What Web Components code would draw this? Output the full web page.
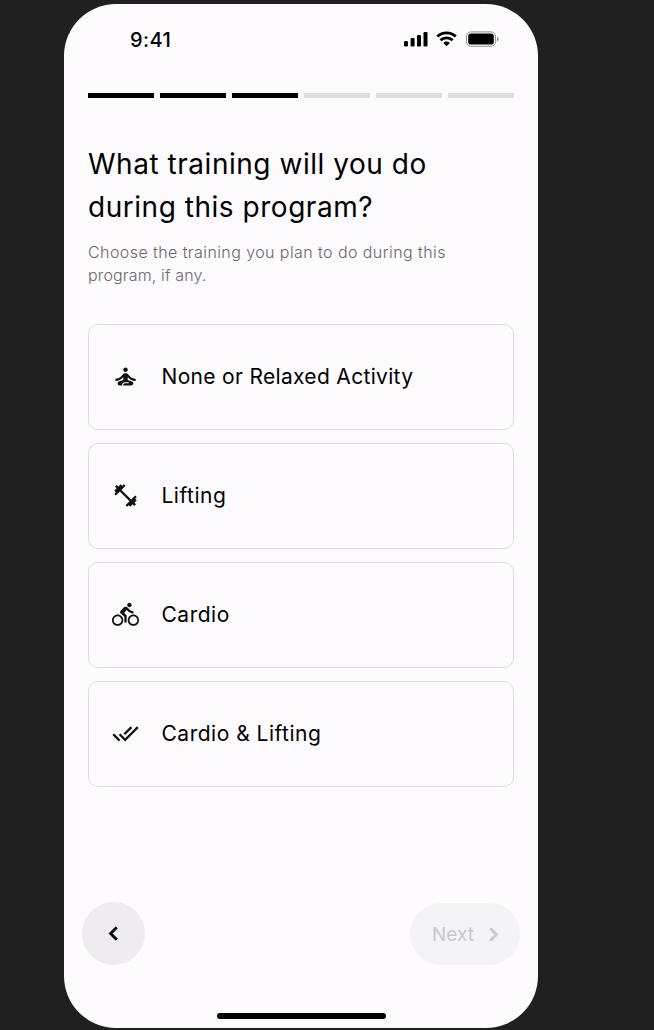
<!DOCTYPE html>
<html lang="en">
<head>
<meta charset="utf-8">
<title>Training setup</title>
<style>
html,body{margin:0;height:100%;overflow:hidden;background:#202020}
body{font-family:Inter,"Liberation Sans",sans-serif}
</style>
</head>
<body>
<training-screen></training-screen>
<script>
const define = (name, html, setup) => {
  const tpl = document.createElement('template');
  tpl.innerHTML = html;
  customElements.define(name, class extends HTMLElement {
    constructor() {
      super();
      this.attachShadow({mode: 'open'}).append(tpl.content.cloneNode(true));
    }
    connectedCallback() { if (setup) setup(this, this.shadowRoot); }
  });
};

const ICONS = {
  meditation: 'M12 4C13.11 4 14 4.89 14 6C14 7.11 13.11 8 12 8C10.9 8 10 7.11 10 6C10 4.9 10.9 4 12 4M21 16V14C18.76 14 16.84 13.04 15.4 11.32L14.06 9.72C13.68 9.26 13.12 9 12.53 9H11.5C10.89 9 10.33 9.26 9.95 9.72L8.61 11.32C7.16 13.04 5.24 14 3 14V16C5.77 16 8.19 14.83 10 12.75V15L6.12 16.55C5.45 16.82 5 17.5 5 18.21C5 19.2 5.8 20 6.79 20H9V19.5C9 18.12 10.12 17 11.5 17H14.5C14.78 17 15 17.22 15 17.5C15 17.78 14.78 18 14.5 18H11.5C10.67 18 10 18.67 10 19.5V20H17.1C18.11 20 19 19.11 19 18.1C19 17.4 18.55 16.81 17.88 16.55L14 15V12.75C15.81 14.83 18.23 16 21 16Z',
  dumbbell: 'M20.57 14.86L22 13.43 20.57 12 17 15.57 8.43 7 12 3.43 10.57 2 9.14 3.43 7.71 2 5.57 4.14 4.14 2.71 2.71 4.14l1.43 1.43L2 7.71l1.43 1.43L2 10.57 3.43 12 7 8.43 15.57 17 12 20.57 13.43 22l1.43-1.43L16.29 22l2.14-2.14 1.43 1.43 1.43-1.43-1.43-1.43L22 16.29z',
  bike: 'M15.5 5.5c1.1 0 2-.9 2-2s-.9-2-2-2-2 .9-2 2 .9 2 2 2zM5 12c-2.8 0-5 2.2-5 5s2.2 5 5 5 5-2.2 5-5-2.2-5-5-5zm0 8.5c-1.9 0-3.5-1.6-3.5-3.5s1.6-3.5 3.5-3.5 3.5 1.6 3.5 3.5-1.6 3.5-3.5 3.5zm5.8-10l2.4-2.4.8.8c1.3 1.3 3 2.1 5.1 2.1V9c-1.5 0-2.7-.6-3.6-1.5l-1.9-1.9c-.5-.4-1-.6-1.6-.6s-1.1.2-1.4.6L7.8 8.4c-.4.4-.6.9-.6 1.4 0 .6.2 1.1.6 1.4L11 14v5h2v-6.2l-2.2-2.3zM19 12c-2.8 0-5 2.2-5 5s2.2 5 5 5 5-2.2 5-5-2.2-5-5-5zm0 8.5c-1.9 0-3.5-1.6-3.5-3.5s1.6-3.5 3.5-3.5 3.5 1.6 3.5 3.5-1.6 3.5-3.5 3.5z',
  checks: 'M18 7l-1.41-1.41-6.34 6.34 1.41 1.41L18 7zm4.24-1.41L11.66 16.17 7.48 12l-1.41 1.41L11.66 19l12-12-1.42-1.41zM.41 13.41L6 19l1.41-1.41L1.83 12 .41 13.41z',
  left: 'M15.41 7.41L14 6l-6 6 6 6 1.41-1.41L10.83 12z',
  right: 'M8.59 16.59L13.17 12 8.59 7.41 10 6l6 6-6 6z'
};

define('app-icon', `
<style>:host{display:block;width:27px;height:27px;flex:none}svg{display:block;width:100%;height:100%;fill:currentColor;overflow:visible}
:host([bold]) svg{stroke:currentColor;stroke-width:.6}</style>
<svg viewBox="0 0 24 24"><path/></svg>`,
(el, root) => root.querySelector('path').setAttribute('d', ICONS[el.getAttribute('name')]));

define('status-bar', `
<style>
:host{display:flex;align-items:center;justify-content:space-between;height:30px;padding:21px 39px 0 66px;margin-bottom:-1px;color:#000}
time{font-size:20px;font-weight:500;letter-spacing:.4px;line-height:30px}
svg{display:block;margin-top:-2px}
</style>
<time>9:41</time>
<svg width="95" height="16" viewBox="0 0 95 16">
  <rect x="0" y="10" width="4" height="5.5" rx="1.2"/><rect x="6.6" y="7" width="4" height="8.500" rx="1.2"/>
  <rect x="13" y="4" width="4" height="11.500" rx="1.2"/><rect x="19.500" y="1" width="4" height="14.500" rx="1.2"/>
  <g fill="none" stroke="#000" stroke-width="2.800"><path d="M33.300 5.600a13.300 13.300 0 0 1 18.500 0"/><path d="M36.500 9.300a8.700 8.700 0 0 1 12.100 0"/></g>
  <path d="M42.550 15.300L39.300 12a4.800 4.800 0 0 1 6.500 0z"/>
  <rect x="62.500" y=".9" width="29" height="14.400" rx="4.600" fill="none" stroke="#8e8c90"/>
  <rect x="64.200" y="2.600" width="25.600" height="11" rx="3.200"/>
  <path d="M93 5.700q1.700.7 1.700 2.400t-1.700 2.400z" fill="#8e8c90"/>
</svg>`);

define('step-progress', `
<style>:host{display:flex;gap:6px;height:5px}i{flex:1;background:#dfdde0}i.on{background:#000}</style>`,
(el, root) => {
  for (let n = 0; n < +el.getAttribute('total'); n++) {
    const bar = document.createElement('i');
    if (n < +el.getAttribute('value')) bar.className = 'on';
    root.append(bar);
  }
});

define('option-card', `
<style>
:host{display:flex;align-items:center;gap:22.500px;box-sizing:border-box;height:106px;padding:0 23px;border:1px solid #dfdde1;border-radius:10px;color:#000;font-size:21px;line-height:30px;letter-spacing:.5px}
app-icon{color:#111014;transform:translateY(-1px)}
span{white-space:nowrap}
</style>
<app-icon></app-icon><span><slot></slot></span>`,
(el, root) => {
  const icon = root.querySelector('app-icon');
  icon.setAttribute('name', el.getAttribute('icon'));
  icon.replaceWith(icon.cloneNode());
});

define('nav-button', `
<style>
:host{display:flex;align-items:center;justify-content:center;box-sizing:border-box;height:63px;width:63px;border-radius:32px;background:#eeecf1;color:#000}
:host([disabled]){height:62px;width:110px;background:#f4f3f8;color:#cac8cc;font-size:19px;gap:6px;padding-left:9px}
</style><slot></slot>`);

define('training-screen', `
<style>
:host{display:block;box-sizing:border-box;height:1030px;padding:4px 116px 2px 64px;background:#202020}
main{display:flex;flex-direction:column;box-sizing:border-box;height:1024px;border-radius:52px;background:#fdfbfd}
section{padding:0 24px}
step-progress{margin-top:39px}
h1{margin:45px 0 0;font-size:28px;line-height:43px;font-weight:400;letter-spacing:.53px;color:#000}
p{margin:12px 0 0;font-size:16px;line-height:23px;color:#69676c;font-weight:300;letter-spacing:.42px}
p span+span{letter-spacing:.15px}
h1 span,p span{display:block;white-space:nowrap}
.list{display:grid;gap:13px;margin-top:37px}
.wide{letter-spacing:.32px}
footer{display:flex;justify-content:space-between;align-items:flex-end;margin-top:auto;padding:0 18px}
.home{width:169px;height:6px;border-radius:3px;background:#000;margin:48px auto 9px}
</style>
<main>
  <status-bar></status-bar>
  <section>
    <step-progress total="6" value="3"></step-progress>
    <h1><span>What training will you do</span><span>during this program?</span></h1>
    <p><span>Choose the training you plan to do during this</span><span>program, if any.</span></p>
    <div class="list">
      <option-card class="wide" icon="meditation">None or Relaxed Activity</option-card>
      <option-card icon="dumbbell">Lifting</option-card>
      <option-card icon="bike">Cardio</option-card>
      <option-card icon="checks">Cardio &amp; Lifting</option-card>
    </div>
  </section>
  <footer>
    <nav-button><app-icon name="left" bold></app-icon></nav-button>
    <nav-button disabled>Next<app-icon name="right" bold></app-icon></nav-button>
  </footer>
  <div class="home"></div>
</main>`);
</script>
</body>
</html>
